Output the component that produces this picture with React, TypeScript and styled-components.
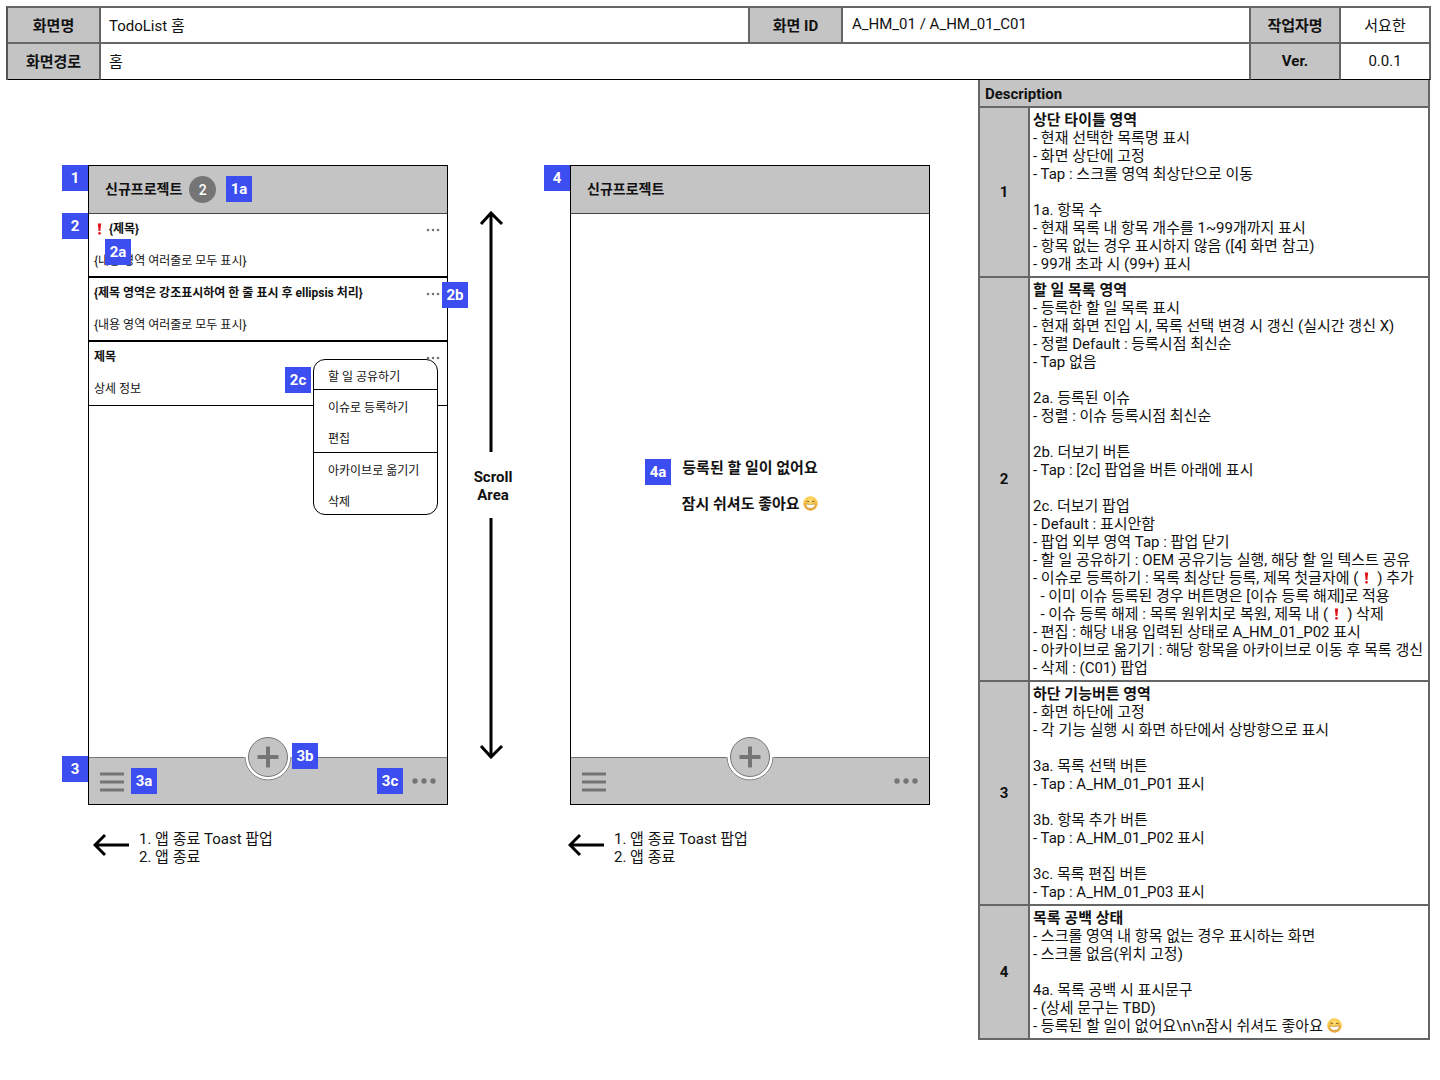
import styled, { createGlobalStyle } from "styled-components";

const GlobalStyle = createGlobalStyle`
  * {
    box-sizing: border-box;
  }
  body {
    margin: 0;
    background: #fff;
    color: #111;
    font-family: Roboto, "Noto Sans CJK KR", sans-serif;
    font-size: 15px;
  }
`;

const RedMark = ({ $wide }: { $wide?: boolean }) => (
  <MarkSvg $wide={$wide} viewBox="0 0 8 14" aria-hidden="true">
    <path d="M2 0.5h4L5 9.2H3z" fill="#e0161b" />
    <circle cx="4" cy="12" r="1.6" fill="#e0161b" />
  </MarkSvg>
);

const Smile = ({ id }: { id: string }) => (
  <SmileSvg viewBox="0 0 16 16" aria-hidden="true">
    <defs>
      <radialGradient id={id} cx="50%" cy="35%" r="65%">
        <stop offset="0%" stopColor="#fde27a" />
        <stop offset="70%" stopColor="#f9c23f" />
        <stop offset="100%" stopColor="#e8912a" />
      </radialGradient>
    </defs>
    <circle cx="8" cy="8" r="7.7" fill={`url(#${id})`} />
    <path d="M3.6 6.2q1.5-1.6 3 0M9.4 6.2q1.5-1.6 3 0" fill="none" stroke="#7a4f14" strokeWidth="1" />
    <path d="M2.8 8.4q5.2 1.2 10.4 0-.4 4.8-5.2 4.8t-5.2-4.8z" fill="#fff" stroke="#a8701c" strokeWidth=".6" />
  </SmileSvg>
);

const Dots = () => (
  <DotsSvg viewBox="0 0 14 4" aria-hidden="true">
    <circle cx="2" cy="2" r="1.3" />
    <circle cx="7" cy="2" r="1.3" />
    <circle cx="12" cy="2" r="1.3" />
  </DotsSvg>
);

const Fab = () => (
  <FabSvg viewBox="0 0 48 48" aria-hidden="true">
    <circle cx="24" cy="24" r="23.5" fill="#fff" />
    <path d="M1 24a23 23 0 0 0 46 0" fill="none" stroke="#757575" strokeWidth="1" />
    <circle cx="24" cy="24" r="19.5" fill="#c4c4c4" stroke="#757575" strokeWidth="1" />
    <path d="M24 13.5v21M13.5 24h21" stroke="#757575" strokeWidth="4" />
  </FabSvg>
);

const Toolbar = ({ badges }: { badges?: boolean }) => (
  <BottomBar>
    <MenuSvg viewBox="0 0 24 20" aria-hidden="true">
      <path d="M0 2h24M0 10h24M0 18h24" stroke="#757575" strokeWidth="3" />
    </MenuSvg>
    <Fab />
    <MoreSvg viewBox="0 0 24 6" aria-hidden="true">
      <circle cx="3" cy="3" r="2.7" />
      <circle cx="12" cy="3" r="2.7" />
      <circle cx="21" cy="3" r="2.7" />
    </MoreSvg>
    {badges && (
      <>
        <Badge $x={42} $y={10}>3a</Badge>
        <Badge $x={203} $y={-15}>3b</Badge>
        <Badge $x={288} $y={10}>3c</Badge>
      </>
    )}
  </BottomBar>
);

const BackNote = ({ $shift }: { $shift: number }) => (
  <Back $shift={$shift}>
    <BackArrow viewBox="0 0 36 24" aria-hidden="true">
      <path d="M36 12H2M12 2L2 12l10 10" fill="none" stroke="#000" strokeWidth="3" />
    </BackArrow>
    <BackText>
      1. 앱 종료 Toast 팝업
      <br />
      2. 앱 종료
    </BackText>
  </Back>
);

type Row = { no: string; lines: React.ReactNode[] };

const rows: Row[] = [
  {
    no: "1",
    lines: [
      <b>상단 타이틀 영역</b>,
      "- 현재 선택한 목록명 표시",
      "- 화면 상단에 고정",
      "- Tap : 스크롤 영역 최상단으로 이동",
      "",
      "1a. 항목 수",
      "- 현재 목록 내 항목 개수를 1~99개까지 표시",
      "- 항목 없는 경우 표시하지 않음 ([4] 화면 참고)",
      "- 99개 초과 시 (99+) 표시",
    ],
  },
  {
    no: "2",
    lines: [
      <b>할 일 목록 영역</b>,
      "- 등록한 할 일 목록 표시",
      "- 현재 화면 진입 시, 목록 선택 변경 시 갱신 (실시간 갱신 X)",
      "- 정렬 Default : 등록시점 최신순",
      "- Tap 없음",
      "",
      "2a. 등록된 이슈",
      "- 정렬 : 이슈 등록시점 최신순",
      "",
      "2b. 더보기 버튼",
      "- Tap : [2c] 팝업을 버튼 아래에 표시",
      "",
      "2c. 더보기 팝업",
      "- Default : 표시안함",
      "- 팝업 외부 영역 Tap : 팝업 닫기",
      "- 할 일 공유하기 : OEM 공유기능 실행, 해당 할 일 텍스트 공유",
      <>- 이슈로 등록하기 : 목록 최상단 등록, 제목 첫글자에 (<RedMark $wide />) 추가</>,
      "  - 이미 이슈 등록된 경우 버튼명은 [이슈 등록 해제]로 적용",
      <>{"  "}- 이슈 등록 해제 : 목록 원위치로 복원, 제목 내 (<RedMark $wide />) 삭제</>,
      "- 편집 : 해당 내용 입력된 상태로 A_HM_01_P02 표시",
      "- 아카이브로 옮기기 : 해당 항목을 아카이브로 이동 후 목록 갱신",
      "- 삭제 : (C01) 팝업",
    ],
  },
  {
    no: "3",
    lines: [
      <b>하단 기능버튼 영역</b>,
      "- 화면 하단에 고정",
      "- 각 기능 실행 시 화면 하단에서 상방향으로 표시",
      "",
      "3a. 목록 선택 버튼",
      "- Tap : A_HM_01_P01 표시",
      "",
      "3b. 항목 추가 버튼",
      "- Tap : A_HM_01_P02 표시",
      "",
      "3c. 목록 편집 버튼",
      "- Tap : A_HM_01_P03 표시",
    ],
  },
  {
    no: "4",
    lines: [
      <b>목록 공백 상태</b>,
      "- 스크롤 영역 내 항목 없는 경우 표시하는 화면",
      "- 스크롤 없음(위치 고정)",
      "",
      "4a. 목록 공백 시 표시문구",
      "- (상세 문구는 TBD)",
      <>- 등록된 할 일이 없어요\n\n잠시 쉬셔도 좋아요 <Smile id="smile-desc" /></>,
    ],
  },
];

export default function App() {
  return (
    <Page>
      <GlobalStyle />
      <Header>
        <HeadLabel>화면명</HeadLabel>
        <HeadValue $inset={8}>TodoList 홈</HeadValue>
        <HeadLabel>화면 ID</HeadLabel>
        <HeadValue>A_HM_01 / A_HM_01_C01</HeadValue>
        <HeadLabel>작업자명</HeadLabel>
        <HeadValue $center>서요한</HeadValue>
        <HeadLabel $last>화면경로</HeadLabel>
        <HeadValue $last $span={3} $inset={8}>홈</HeadValue>
        <HeadLabel $last>Ver.</HeadLabel>
        <HeadValue $last $center>0.0.1</HeadValue>
      </Header>

      <Main>
        <Canvas>
          <Phone>
            <Badge $x={-27} $y={-1}>1</Badge>
            <Badge $x={-27} $y={47}>2</Badge>
            <Badge $x={-27} $y={590}>3</Badge>
            <Badge $x={137} $y={10}>1a</Badge>
            <Badge $x={16} $y={73}>2a</Badge>
            <Badge $x={353} $y={116}>2b</Badge>
            <Badge $x={196} $y={201}>2c</Badge>
            <TitleBar>
              <TitleText>신규프로젝트</TitleText>
              <Count>2</Count>
            </TitleBar>
            <List>
              <Item $heavy>
                <ItemTitle>
                  <RedMark />
                  <IssueGap />
                  {"{제목}"}
                </ItemTitle>
                <ItemBody>{"{내용 영역 여러줄로 모두 표시}"}</ItemBody>
                <Dots />
              </Item>
              <Item $heavy>
                <ItemTitle>{"{제목 영역은 강조표시하여 한 줄 표시 후 ellipsis 처리}"}</ItemTitle>
                <ItemBody>{"{내용 영역 여러줄로 모두 표시}"}</ItemBody>
                <Dots />
              </Item>
              <Item>
                <ItemTitle>제목</ItemTitle>
                <ItemBody>상세 정보</ItemBody>
                <Dots />
              </Item>
              <Popup>
                <PopupGroup>
                  <PopupItem $first>할 일 공유하기</PopupItem>
                </PopupGroup>
                <PopupGroup>
                  <PopupItem>이슈로 등록하기</PopupItem>
                  <PopupItem>편집</PopupItem>
                </PopupGroup>
                <PopupGroup>
                  <PopupItem>아카이브로 옮기기</PopupItem>
                  <PopupItem>삭제</PopupItem>
                </PopupGroup>
              </Popup>
            </List>
            <Toolbar badges />
          </Phone>

          <ScrollColumn>
            <ScrollArrow viewBox="0 0 90 241" aria-hidden="true">
              <path d="M33 13L43 2l11 11M43 3v238" fill="none" stroke="#000" strokeWidth="3" />
            </ScrollArrow>
            <ScrollLabel>
              Scroll
              <br />
              Area
            </ScrollLabel>
            <ScrollArrow viewBox="0 0 90 241" aria-hidden="true">
              <path d="M33 228l10 11 11-11M43 238V0" fill="none" stroke="#000" strokeWidth="3" />
            </ScrollArrow>
          </ScrollColumn>

          <Phone>
            <Badge $x={-27} $y={-1}>4</Badge>
            <TitleBar>
              <TitleText>신규프로젝트</TitleText>
            </TitleBar>
            <Empty>
              <Badge $x={74} $y={245}>4a</Badge>
              등록된 할 일이 없어요
              <br />
              <br />
              잠시 쉬셔도 좋아요 <Smile id="smile-empty" />
            </Empty>
            <Toolbar />
          </Phone>

          <Notes>
            <BackNote $shift={5} />
            <BackNote $shift={120} />
          </Notes>
        </Canvas>

        <Description>
          <DescriptionHead>Description</DescriptionHead>
          {rows.map((row) => (
            <DescriptionRow key={row.no}>
              <RowNumber>{row.no}</RowNumber>
              <RowBody>
                {row.lines.map((line, i) => (
                  <Line key={i}>{line}</Line>
                ))}
              </RowBody>
            </DescriptionRow>
          ))}
        </Description>
      </Main>
    </Page>
  );
}

const Page = styled.div`
  width: 1440px;
  height: 1080px;
  padding: 6px 9px 0 6px;
  overflow: hidden;
`;

const Header = styled.div`
  display: grid;
  grid-template-columns: 93px 649px 93px 408px 90px 90px;
  grid-template-rows: 36px 36px;
  border-top: 2px solid #666;
  border-left: 2px solid #555;
`;

const HeadLabel = styled.div<{ $last?: boolean }>`
  display: flex;
  align-items: center;
  justify-content: center;
  padding-bottom: 2px;
  background: #c4c4c4;
  font-weight: 700;
  border-right: 2px solid #666;
  border-bottom: ${({ $last }) => ($last ? "1px solid #000" : "2px solid #666")};
`;

const HeadValue = styled.div<{ $last?: boolean; $center?: boolean; $span?: number; $inset?: number }>`
  display: flex;
  align-items: center;
  justify-content: ${({ $center }) => ($center ? "center" : "flex-start")};
  padding: 0 0 2px ${({ $center, $inset }) => ($center ? 0 : $inset ?? 9)}px;
  grid-column: span ${({ $span }) => $span ?? 1};
  border-right: 2px solid #666;
  border-bottom: ${({ $last }) => ($last ? "1px solid #000" : "2px solid #666")};
`;

const Main = styled.div`
  display: flex;
`;

const Canvas = styled.div`
  width: 972px;
  padding: 85px 0 0 82px;
  display: grid;
  grid-template-columns: 360px 122px 360px;
  align-content: start;
`;

const Phone = styled.div`
  position: relative;
  height: 640px;
  border: 1px solid #000;
  display: flex;
  flex-direction: column;
  background: #fff;
`;

const Badge = styled.span<{ $x: number; $y: number }>`
  position: absolute;
  z-index: 3;
  left: ${({ $x }) => $x}px;
  top: ${({ $y }) => $y}px;
  width: 26px;
  height: 26px;
  display: flex;
  align-items: center;
  justify-content: center;
  background: #3d4ef0;
  color: #fff;
  font-size: 15px;
  font-weight: 700;
`;

const TitleBar = styled.div`
  height: 48px;
  flex: none;
  display: flex;
  align-items: center;
  gap: 7px;
  padding-left: 16px;
  background: #c4c4c4;
  border-bottom: 1px solid #444;
  font-size: 14px;
  font-weight: 700;
`;

const TitleText = styled.span`
  margin-top: -4px;
`;

const Count = styled.span`
  width: 27px;
  height: 27px;
  border-radius: 50%;
  background: #757575;
  color: #fff;
  font-weight: 500;
  display: flex;
  align-items: center;
  justify-content: center;
`;

const List = styled.div`
  flex: 1;
  position: relative;
`;

const Item = styled.div<{ $heavy?: boolean }>`
  position: relative;
  height: 64px;
  padding: 8px 5px 0;
  border-bottom: ${({ $heavy }) => ($heavy ? "2px solid #000" : "1px solid #000")};
`;

const ItemTitle = styled.div`
  display: flex;
  align-items: center;
  height: 14px;
  font-size: 12px;
  font-weight: 700;
  line-height: 14px;
`;

const IssueGap = styled.span`
  width: 4px;
`;

const ItemBody = styled.div`
  margin-top: 18px;
  font-size: 12px;
  line-height: 14px;
`;

const MarkSvg = styled.svg<{ $wide?: boolean }>`
  display: inline-block;
  width: 7px;
  height: 12px;
  vertical-align: -1px;
  margin: ${({ $wide }) => ($wide ? "0 7px 0 5px" : "0 2px")};
`;

const SmileSvg = styled.svg`
  display: inline-block;
  width: 15px;
  height: 15px;
  vertical-align: -2px;
`;

const DotsSvg = styled.svg`
  position: absolute;
  top: 14px;
  right: 7px;
  width: 14px;
  height: 4px;
  fill: #757575;
`;

const Popup = styled.div`
  position: absolute;
  z-index: 2;
  top: 145px;
  right: 9px;
  width: 125px;
  height: 156px;
  background: #fff;
  border: 1px solid #000;
  border-radius: 12px;
  overflow: hidden;
`;

const PopupGroup = styled.div`
  border-bottom: 1px solid #000;

  &:last-child {
    border-bottom: none;
  }
`;

const PopupItem = styled.div<{ $first?: boolean }>`
  height: ${({ $first }) => ($first ? "29px" : "31px")};
  padding: 2px 0 0 14px;
  display: flex;
  align-items: center;
  font-size: 12px;
`;

const BottomBar = styled.div`
  position: relative;
  height: 47px;
  flex: none;
  background: #c4c4c4;
  border-top: 1px solid #757575;
`;

const MenuSvg = styled.svg`
  position: absolute;
  left: 11px;
  top: 14px;
  width: 24px;
  height: 20px;
`;

const FabSvg = styled.svg`
  position: absolute;
  left: 155px;
  top: -25px;
  width: 48px;
  height: 48px;
`;

const MoreSvg = styled.svg`
  position: absolute;
  right: 11px;
  top: 20px;
  width: 24px;
  height: 6px;
  fill: #757575;
`;

const ScrollColumn = styled.div`
  width: 90px;
  padding-top: 46px;
  display: flex;
  flex-direction: column;
  align-items: center;
`;

const ScrollArrow = styled.svg`
  width: 90px;
  height: 241px;
  flex: none;
`;

const ScrollLabel = styled.div`
  margin: 16px 0 14px;
  font-weight: 700;
  line-height: 18px;
  text-align: center;
`;

const Empty = styled.div`
  flex: 1;
  padding-top: 245px;
  text-align: center;
  font-weight: 700;
  line-height: 18px;
  position: relative;
`;

const Notes = styled.div`
  grid-column: 1 / -1;
  display: grid;
  grid-template-columns: 360px 362px;
  padding-top: 25px;
`;

const Back = styled.div<{ $shift: number }>`
  display: flex;
  align-items: center;
  gap: 10px;
  margin-left: ${({ $shift }) => $shift}px;
`;

const BackArrow = styled.svg`
  width: 36px;
  height: 24px;
  flex: none;
  margin-bottom: 6px;
`;

const BackText = styled.div`
  line-height: 18px;
  white-space: nowrap;
`;

const Description = styled.div`
  width: 452px;
  border-left: 2px solid #666;
  border-right: 2px solid #666;
  align-self: flex-start;
`;

const DescriptionHead = styled.div`
  height: 28px;
  padding: 1px 0 0 5px;
  display: flex;
  align-items: center;
  background: #c4c4c4;
  font-weight: 700;
  border-bottom: 2px solid #666;
`;

const DescriptionRow = styled.div`
  display: grid;
  grid-template-columns: 50px 1fr;
  border-bottom: 2px solid #666;
`;

const RowNumber = styled.div`
  display: flex;
  align-items: center;
  justify-content: center;
  background: #c4c4c4;
  border-right: 2px solid #666;
  font-weight: 700;
`;

const RowBody = styled.div`
  padding: 3px 3px 3px 3px;
`;

const Line = styled.div`
  height: 18px;
  line-height: 18px;
  white-space: pre;
`;
